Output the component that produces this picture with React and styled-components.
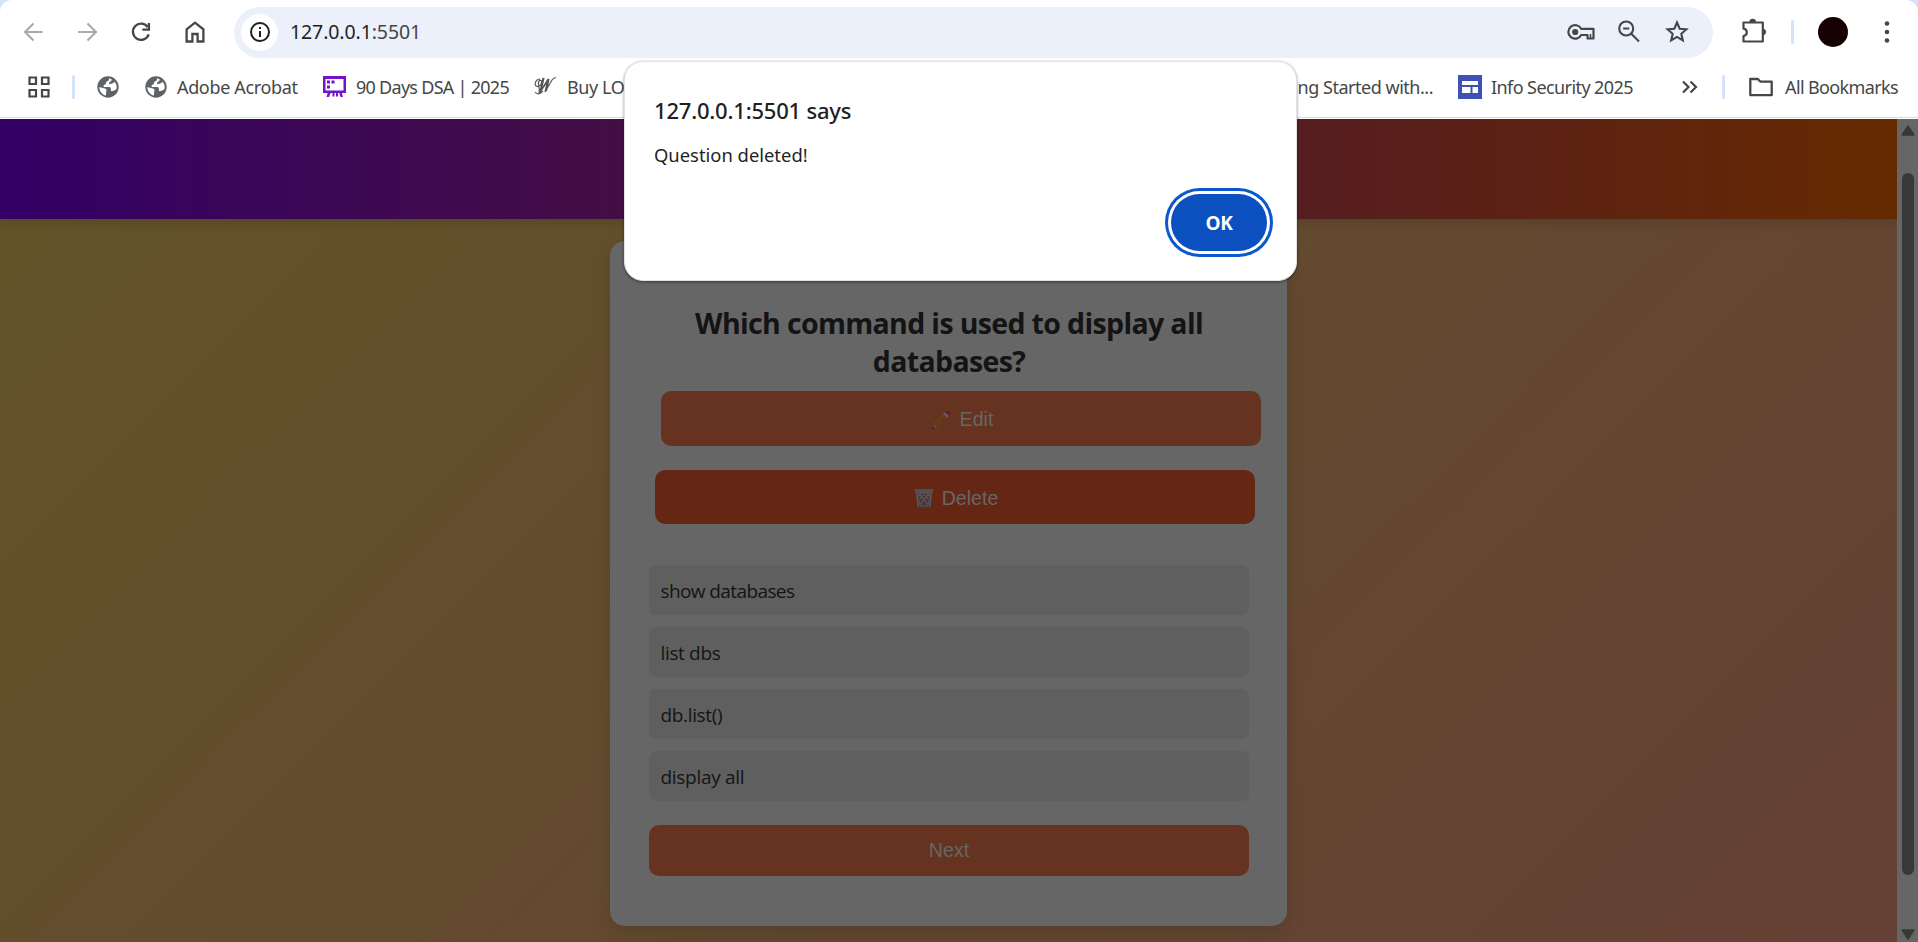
import React from 'react';
import styled, { createGlobalStyle } from 'styled-components';

const uiFont = `"Noto Sans", "Open Sans", sans-serif`;
const pageFont = `"Open Sans", "Noto Sans", sans-serif`;

const Global = createGlobalStyle`
  * { box-sizing: border-box; }
  html, body { margin: 0; height: 100%; overflow: hidden; background: #fff; }
`;

const Window = styled.div`
  position: relative;
  width: 1918px;
  height: 942px;
  overflow: hidden;
  display: flex;
  flex-direction: column;
  background: #d3e3fd;
`;

const Chrome = styled.header`
  height: 119px;
  flex: none;
  background: #fff;
  border-radius: 12px 12px 0 0;
  box-shadow: inset 0 -1px 0 #fff, inset 0 -2px 0 #d9dbdd;
  display: flex;
  flex-direction: column;
`;

const Toolbar = styled.div`
  height: 64px;
  display: flex;
  align-items: center;
  padding-left: 20px;
`;

const ToolIcon = styled.svg`
  flex: none;
  display: block;
  margin-left: ${(p) => p.$ml || 0}px;
`;

const AddressBar = styled.div`
  margin-left: 25px;
  width: 1479px;
  height: 51px;
  border-radius: 26px;
  background: #ebf0fa;
  display: flex;
  align-items: center;
  padding: 0 23px 0 7px;
`;

const SiteInfo = styled.span`
  width: 37px;
  height: 37px;
  border-radius: 50%;
  background: #fff;
  display: flex;
  align-items: center;
  justify-content: center;
`;

const Label = styled.span`
  font: ${(p) => p.$weight || 400} ${(p) => p.$size || 18}px / 1.35 ${uiFont};
  letter-spacing: ${(p) => p.$ls || 0}px;
  color: ${(p) => p.$color || '#454746'};
  white-space: nowrap;
`;

const Address = styled(Label)`
  margin-left: 12px;
  margin-right: auto;
  b { font-weight: 400; color: #1f1f1f; }
`;

const Divider = styled.i`
  flex: none;
  width: 3px;
  height: 24px;
  border-radius: 2px;
  background: #d3e3fd;
  margin-left: ${(p) => p.$ml}px;
`;

const Avatar = styled.span`
  width: 30px;
  height: 30px;
  border-radius: 50%;
  background: #150002;
  margin-left: 24px;
`;

const Bookmarks = styled.nav`
  height: 46px;
  display: flex;
  align-items: center;
  justify-content: space-between;
  padding: 0 20px 0 27px;
`;

const BookmarkGroup = styled.div`
  display: flex;
  align-items: center;
`;

const Bookmark = styled.div`
  display: flex;
  align-items: center;
  gap: ${(p) => p.$gap || 10}px;
  margin-left: ${(p) => p.$ml || 0}px;
  ${(p) => p.$w && `width: ${p.$w}px;`}
  flex: none;
`;

const Viewport = styled.div`
  flex: 1;
  min-height: 0;
  display: flex;
`;

const Page = styled.main`
  flex: 1;
  display: flex;
  flex-direction: column;
  align-items: center;
  background: linear-gradient(135deg, #625428, #654035);
  overflow: hidden;
`;

const Banner = styled.div`
  width: 100%;
  height: 100px;
  flex: none;
  background: linear-gradient(to right, #330066, #662a00);
  box-shadow: 0 4px 10px rgba(0, 0, 0, 0.12);
`;

const Card = styled.section`
  width: 677px;
  height: 685px;
  margin-top: 22px;
  flex: none;
  border-radius: 15px;
  background: #666;
  box-shadow: 0 8px 20px rgba(0, 0, 0, 0.12);
  padding: 63px 38px 0 39px;
  display: flex;
  flex-direction: column;
`;

const Question = styled.h2`
  margin: 0;
  text-align: center;
  font: 700 28.5px/38px ${pageFont};
  letter-spacing: -0.65px;
  color: #141414;
`;

const Action = styled.button`
  border: 0;
  width: 600px;
  height: ${(p) => p.$h || 54}px;
  flex: none;
  border-radius: 10px;
  margin: ${(p) => p.$mt}px 0 0 ${(p) => p.$ml || 0}px;
  background: ${(p) => p.$bg || '#663320'};
  color: #666;
  font: 400 19.6px "Liberation Sans", Arial, sans-serif;
  display: flex;
  align-items: center;
  justify-content: center;
  gap: 8px;
  padding: ${(p) => p.$pad || '0'};
`;

const Options = styled.ul`
  list-style: none;
  margin: 41px 0 0;
  padding: 0;
  display: flex;
  flex-direction: column;
  gap: 12px;
`;

const Option = styled.li`
  height: 50px;
  border-radius: 7px;
  background: #5f5f5f;
  padding: 2px 11.5px 0;
  display: flex;
  align-items: center;
  font: 400 19px ${pageFont};
  letter-spacing: ${(p) => p.$ls}px;
  color: #141414;
`;

const Scrollbar = styled.aside`
  width: 21px;
  flex: none;
  background: #666;
  display: flex;
  flex-direction: column;
  align-items: center;
  padding: 6px 0 2px 1px;
`;

const Thumb = styled.div`
  width: 12px;
  height: 702px;
  margin-top: 37px;
  margin-bottom: auto;
  border-radius: 6px;
  background: #383838;
`;

const Dialog = styled.div`
  position: absolute;
  left: 624px;
  top: 61px;
  width: 673px;
  height: 220px;
  border-radius: 19px;
  background: #fff;
  border: 1px solid #e3e3e3;
  box-shadow: 0 1px 3px rgba(0, 0, 0, 0.45);
  padding: 34px 26px 0 29px;
  display: flex;
  flex-direction: column;
`;

const Message = styled(Label)`
  margin-top: 17px;
`;

const OkButton = styled.button`
  width: 96px;
  height: 57px;
  margin: 26px 3px 0 auto;
  border: 0;
  border-radius: 29px;
  background: #0b50be;
  box-shadow: 0 0 0 3px #fff, 0 0 0 6px #0b57d0;
  color: #fff;
  font: 700 19px ${pageFont};
  letter-spacing: -0.4px;
  padding: 1px 0 0;
`;

const Arrow = ({ flip, ml }) => (
  <ToolIcon $ml={ml} width="28" height="28" viewBox="0 0 28 28" fill="none" stroke="#a9aaaa" strokeWidth="2.1">
    <path d={flip ? 'M5 14H22M14.5 5.5L23 14L14.5 22.5' : 'M22.5 14H6M13.5 5.5L5 14L13.5 22.5'} />
  </ToolIcon>
);

const Globe = () => (
  <ToolIcon width="22" height="22" viewBox="0 0 22 22">
    <circle cx="11" cy="11" r="10.7" fill="#5f6368" />
    <path d="M12 2.2C12.6 4 11 5 10 5.5C8.5 6 9.5 8 8 8.5C6.5 9 6 10 7 11H12C14 11 14 13.5 14 15H15.5C17 15 18 14 19.5 13C20 10 19.5 7.5 17.5 5.7C16 8 14 7.4 13 8.3C11.5 8.2 11.8 6.7 12.8 6C14 5 14.8 4 15 3.4ZM2.3 11.2C4 11 6 12 8 12.5C10 13 9.6 15 9 16C9.5 17 8.6 18.5 9 19.6C5.5 19 2.4 15.5 2.3 11.2Z" fill="#fff" />
  </ToolIcon>
);

const Pencil = () => (
  <ToolIcon width="21" height="20" viewBox="0 0 21 20">
    <path d="M1.2 19L3 13.2L6.8 17.2Z" fill="#5e4a38" />
    <path d="M1.2 19L1.9 16.8L3.2 18.3Z" fill="#1d1a1c" />
    <path d="M3 13.2L12.2 4L16 7.8L6.8 17.2Z" fill="#66381a" />
    <path d="M3 13.2L12.2 4L13.4 5.2L4.2 14.5Z" fill="#66431e" />
    <path d="M12.2 4L14 2.2L18 6L16 7.8Z" fill="#605f68" />
    <path d="M14 2.2Q16 0 18.6 1.5Q20.6 3.5 18 6Z" fill="#661f23" />
  </ToolIcon>
);

const Trash = () => (
  <ToolIcon width="20" height="20" viewBox="0 0 20 20" fill="none" stroke="#595a60" strokeWidth="1.1">
    <path d="M2.5 3.5L4 18H16L17.5 3.5Z" fill="#4c3336" strokeWidth="1.4" />
    <path d="M4 4L14.5 17.5M8 4L16 13M12 4L17 9M16 4L5.5 17.5M12 4L4 13M8 4L3.3 9M4 13L8 18M16 13L12 18" />
    <path d="M0.8 2.3H19.2" stroke="#505157" strokeWidth="2.4" />
    <path d="M3.6 18.4H16.4" stroke="#46474d" strokeWidth="2" />
  </ToolIcon>
);

const ScrollArrow = ({ down }) => (
  <ToolIcon width="14" height="11" viewBox="0 0 14 11" fill="#383838" stroke="#383838" strokeWidth="2" strokeLinejoin="round">
    <path d={down ? 'M1.5 1.3H12.5L7 9.6Z' : 'M1.5 9.7H12.5L7 1.4Z'} />
  </ToolIcon>
);

const options = [
  ['show databases', -0.6],
  ['list dbs', -0.35],
  ['db.list()', -0.35],
  ['display all', -0.3],
];

export default function App() {
  return (
    <Window>
      <Global />
      <Chrome>
        <Toolbar>
          <Arrow />
          <Arrow flip ml={25} />
          <ToolIcon $ml={26} width="28" height="28" viewBox="0 0 28 28" fill="none" stroke="#454746" strokeWidth="2.3">
            <path d="M20.6 9A8.1 8.1 0 1 0 21.7 16.4M21.9 5V11.6H15.3" />
          </ToolIcon>
          <ToolIcon $ml={26} width="28" height="28" viewBox="0 0 28 28" fill="none" stroke="#454746" strokeWidth="2.3">
            <path d="M5.6 11.3L14 4.6L22.4 11.3V23.5H16.6V16H11.4V23.5H5.6Z" />
          </ToolIcon>
          <AddressBar>
            <SiteInfo>
              <svg width="22" height="22" viewBox="0 0 22 22" fill="none" stroke="#1f1f1f" strokeWidth="2">
                <circle cx="11" cy="11" r="9" />
                <path d="M11 10V16M11 6V8" />
              </svg>
            </SiteInfo>
            <Address $size={19.5} $ls={-0.1}><b>127.0.0.1</b>:5501</Address>
            <ToolIcon width="28" height="22" viewBox="0 0 28 22" fill="none" stroke="#454746" strokeWidth="2.2">
              <path d="M14.2 7.8H26.5V17.5H20.5V14H14.2A6.8 6.8 0 1 1 14.2 7.8Z" strokeLinejoin="round" />
              <path d="M23.5 13V17" strokeWidth="1.6" />
              <circle cx="8.2" cy="11" r="3.1" fill="#454746" stroke="none" />
            </ToolIcon>
            <ToolIcon $ml={22} width="24" height="24" viewBox="0 0 24 24" fill="none" stroke="#454746" strokeWidth="2.1">
              <circle cx="9.2" cy="8.5" r="7" />
              <path d="M14 13.5L22 21.5M6.2 8.5H12.2" />
            </ToolIcon>
            <ToolIcon $ml={23} width="26" height="26" viewBox="0 0 26 26" fill="none" stroke="#454746" strokeWidth="2.1">
              <path d="M13 3.5L15.7 9.7L22.4 10.3L17.3 14.8L18.8 21.4L13 17.9L7.2 21.4L8.7 14.8L3.6 10.3L10.3 9.7Z" />
            </ToolIcon>
          </AddressBar>
          <ToolIcon $ml={26} width="29" height="28" viewBox="0 0 29 28" fill="none" stroke="#454746" strokeWidth="2.2">
            <path d="M4.5 4.5H23.8V23.5H4.5V18C8.9 17.4 8.9 11.2 4.5 10.6Z" strokeLinejoin="round" />
            <path d="M10.4 4A3.3 3.3 0 0 1 17 4ZM24.4 10.6A3.5 3.5 0 0 1 24.4 17.4Z" fill="#454746" stroke="none" />
          </ToolIcon>
          <Divider $ml={23} />
          <Avatar />
          <ToolIcon $ml={35} width="8" height="26" fill="#454746">
            <circle cx="4" cy="4.5" r="2.3" /><circle cx="4" cy="13" r="2.3" /><circle cx="4" cy="21.5" r="2.3" />
          </ToolIcon>
        </Toolbar>
        <Bookmarks>
          <BookmarkGroup>
            <ToolIcon width="24" height="24" viewBox="0 0 24 24" fill="none" stroke="#454746" strokeWidth="2.2">
              <path d="M2.5 2.5H9V9H2.5ZM15 2.5H21.5V9H15ZM2.5 15H9V21.5H2.5ZM15 15H21.5V21.5H15Z" />
            </ToolIcon>
            <Divider $ml={21} />
            <Bookmark $ml={22} $w={22}><Globe /></Bookmark>
            <Bookmark $ml={26} $w={178}><Globe /><Label $ls={-0.35}>Adobe Acrobat</Label></Bookmark>
            <Bookmark $w={210} $gap={9}>
              <ToolIcon width="24" height="24" viewBox="0 0 24 24" fill="#7212cf">
                <path fillRule="evenodd" d="M0 1H23V18H0ZM2.5 4V15.5H20.5V4Z" />
                <path d="M4 5.5H7V8.5H4ZM8.5 5.5H11.5V8.5H8.5ZM4 10.5H7V13.5H4ZM5 17H8L6 22H3.5ZM9.5 17H11.5V21.5H9.5ZM13 17H15V21.5H13ZM16 17H18.5L20 22H17.5Z" />
              </ToolIcon>
              <Label $ls={-0.72}>90 Days DSA | 2025</Label>
            </Bookmark>
            <Bookmark $gap={10}>
              <ToolIcon width="24" height="24" viewBox="0 0 24 24" fill="none" stroke="#555" strokeWidth="1.2">
                <path d="M7 4C1 5 1 12 5 11.5C9 11 10 4 6.5 5.5C3 8 8 12 6 19M10 3L7 17L15 4L12 17L19 5Q20 3 23 2.5M11 3L8 16L16 4L13.5 16M2 17Q5 21 10 16" />
              </ToolIcon>
              <Label $ls={-0.4}>Buy LOV</Label>
            </Bookmark>
          </BookmarkGroup>
          <BookmarkGroup>
            <Label $ls={-0.48}>ing Started with...</Label>
            <Bookmark $ml={25} $gap={9} $w={224}>
              <ToolIcon width="24" height="24" viewBox="0 0 24 24">
                <path d="M0 0H24V24H0Z" fill="#3f51b5" />
                <path d="M4 6H20V10H4ZM4 12H12.5V18H4ZM14.5 12H20V18H14.5Z" fill="#fff" />
              </ToolIcon>
              <Label $ls={-0.58}>Info Security 2025</Label>
            </Bookmark>
            <ToolIcon width="16" height="14" viewBox="0 0 16 14" fill="none" stroke="#454746" strokeWidth="2.2">
              <path d="M1 1.5L6.5 7L1 12.5M8.5 1.5L14 7L8.5 12.5" />
            </ToolIcon>
            <Divider $ml={24} />
            <Bookmark $ml={24} $gap={12} $w={149}>
              <ToolIcon width="24" height="20" viewBox="0 0 24 20" fill="none" stroke="#454746" strokeWidth="2.3" strokeLinejoin="round">
                <path d="M1.3 2H8.8L11.5 4.7H22.7V18.2H1.3Z" />
              </ToolIcon>
              <Label $ls={-0.62}>All Bookmarks</Label>
            </Bookmark>
          </BookmarkGroup>
        </Bookmarks>
      </Chrome>
      <Viewport>
        <Page>
          <Banner />
          <Card>
            <Question>Which command is used to display all databases?</Question>
            <Action $mt={11} $ml={12} $h={55} $pad="2px 0 0 2px"><Pencil />Edit</Action>
            <Action $mt={24} $ml={6} $bg="#662614" $pad="2px 0 0 2px"><Trash />Delete</Action>
            <Options>
              {options.map(([text, ls]) => <Option key={text} $ls={ls}>{text}</Option>)}
            </Options>
            <Action $mt={24} $h={51}>Next</Action>
          </Card>
        </Page>
        <Scrollbar><ScrollArrow /><Thumb /><ScrollArrow down /></Scrollbar>
      </Viewport>
      <Dialog>
        <Label $size={22} $weight={500} $ls={-0.2} $color="#1f1f1f">127.0.0.1:5501 says</Label>
        <Message $size={18.4} $color="#1f1f1f">Question deleted!</Message>
        <OkButton>OK</OkButton>
      </Dialog>
    </Window>
  );
}
